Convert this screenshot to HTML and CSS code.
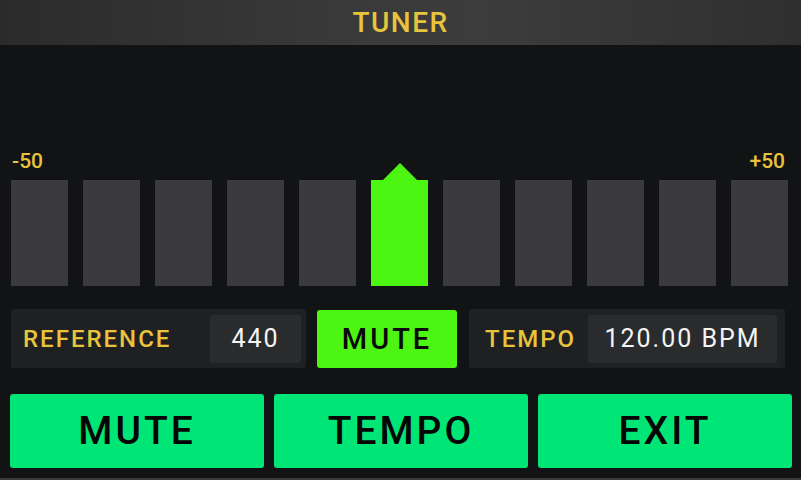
FILE: index.html
```html
<!DOCTYPE html>
<html lang="en">
<head>
    <meta charset="UTF-8">
    <title>Tuner</title>
    <link rel="stylesheet" href="styles.css">
</head>
<body>

<div class="header">TUNER</div>

<div class="scale">
    <span>-50</span>
    <span>+50</span>
</div>

<div class="meter">
    <div class="bar"></div>
    <div class="bar"></div>
    <div class="bar"></div>
    <div class="bar"></div>
    <div class="bar"></div>
    <div class="bar active"></div>
    <div class="bar"></div>
    <div class="bar"></div>
    <div class="bar"></div>
    <div class="bar"></div>
    <div class="bar"></div>
</div>

<div class="settings">
    <div class="panel panel-ref">
        <span class="label">REFERENCE</span>
        <span class="value">440</span>
    </div>
    <button class="mute-toggle">MUTE</button>
    <div class="panel panel-tempo">
        <span class="label">TEMPO</span>
        <span class="value">120.00 BPM</span>
    </div>
</div>

<div class="actions">
    <button class="action-btn">MUTE</button>
    <button class="action-btn">TEMPO</button>
    <button class="action-btn">EXIT</button>
</div>

</body>
</html>
```

FILE: styles.css
```css
body {
    font-family: Roboto, 'Liberation Sans', sans-serif;
    margin: 0;
    padding: 0;
    width: 801px;
    height: 480px;
    overflow: hidden;
    background-color: #121315;
    box-sizing: border-box;
    border-bottom: 2px solid #3a3a3a;
}

.header {
    height: 45px;
    display: flex;
    justify-content: center;
    align-items: center;
    background: linear-gradient(to right, #2b2b2b, #3a3a3a 45%, #3c3c3c 60%, #2f2f2f);
    color: #e8c33c;
    font-size: 28px;
    font-weight: 500;
    letter-spacing: 1.5px;
}

.scale {
    display: flex;
    justify-content: space-between;
    margin-top: 105px;
    padding: 0 16px 0 12px;
    height: 22px;
    line-height: 22px;
    font-size: 21px;
    font-weight: 500;
    color: #e8c33c;
}

.meter {
    display: flex;
    gap: 15px;
    margin-top: 8px;
    padding-left: 11px;
}

.bar {
    width: 57px;
    height: 106px;
    background-color: #3a3a3c;
    position: relative;
}

.bar.active {
    background-color: #4cf512;
}

/* pointer above the active bar */
.bar.active::before {
    content: "";
    position: absolute;
    left: 12px;
    top: -17px;
    border-left: 17px solid transparent;
    border-right: 17px solid transparent;
    border-bottom: 17px solid #4cf512;
}

.settings {
    display: flex;
    align-items: center;
    margin-top: 23px;
    padding-left: 11px;
}

.panel {
    display: flex;
    align-items: center;
    justify-content: space-between;
    height: 59px;
    background-color: #1f2022;
    border-radius: 3px;
    box-sizing: border-box;
}

.panel-ref {
    width: 295px;
    padding: 0 5px 0 12px;
}

.panel-tempo {
    width: 316px;
    padding: 0 8px 0 16px;
    margin-left: 12px;
}

.label {
    color: #e8c33c;
    font-size: 24px;
    font-weight: 500;
    letter-spacing: 2px;
}

.value {
    display: flex;
    align-items: center;
    justify-content: center;
    height: 48px;
    background-color: #2a2b2d;
    border-radius: 3px;
    color: #f4f4f4;
    font-size: 25px;
    letter-spacing: 2px;
}

.panel-ref .value {
    width: 91px;
}

.panel-tempo .value {
    width: 189px;
}

.mute-toggle {
    width: 140px;
    height: 58px;
    margin-left: 11px;
    background-color: #4cf512;
    color: #0a0a0a;
    border: none;
    border-radius: 3px;
    font-family: inherit;
    font-size: 29px;
    font-weight: 500;
    letter-spacing: 3px;
    padding: 0;
}

.actions {
    display: flex;
    gap: 10px;
    margin-top: 26px;
    padding-left: 10px;
}

.action-btn {
    width: 254px;
    height: 74px;
    background-color: #00e676;
    color: #050505;
    border: none;
    border-radius: 3px;
    font-family: inherit;
    font-size: 39px;
    font-weight: 500;
    letter-spacing: 3px;
    padding: 0;
}
```
